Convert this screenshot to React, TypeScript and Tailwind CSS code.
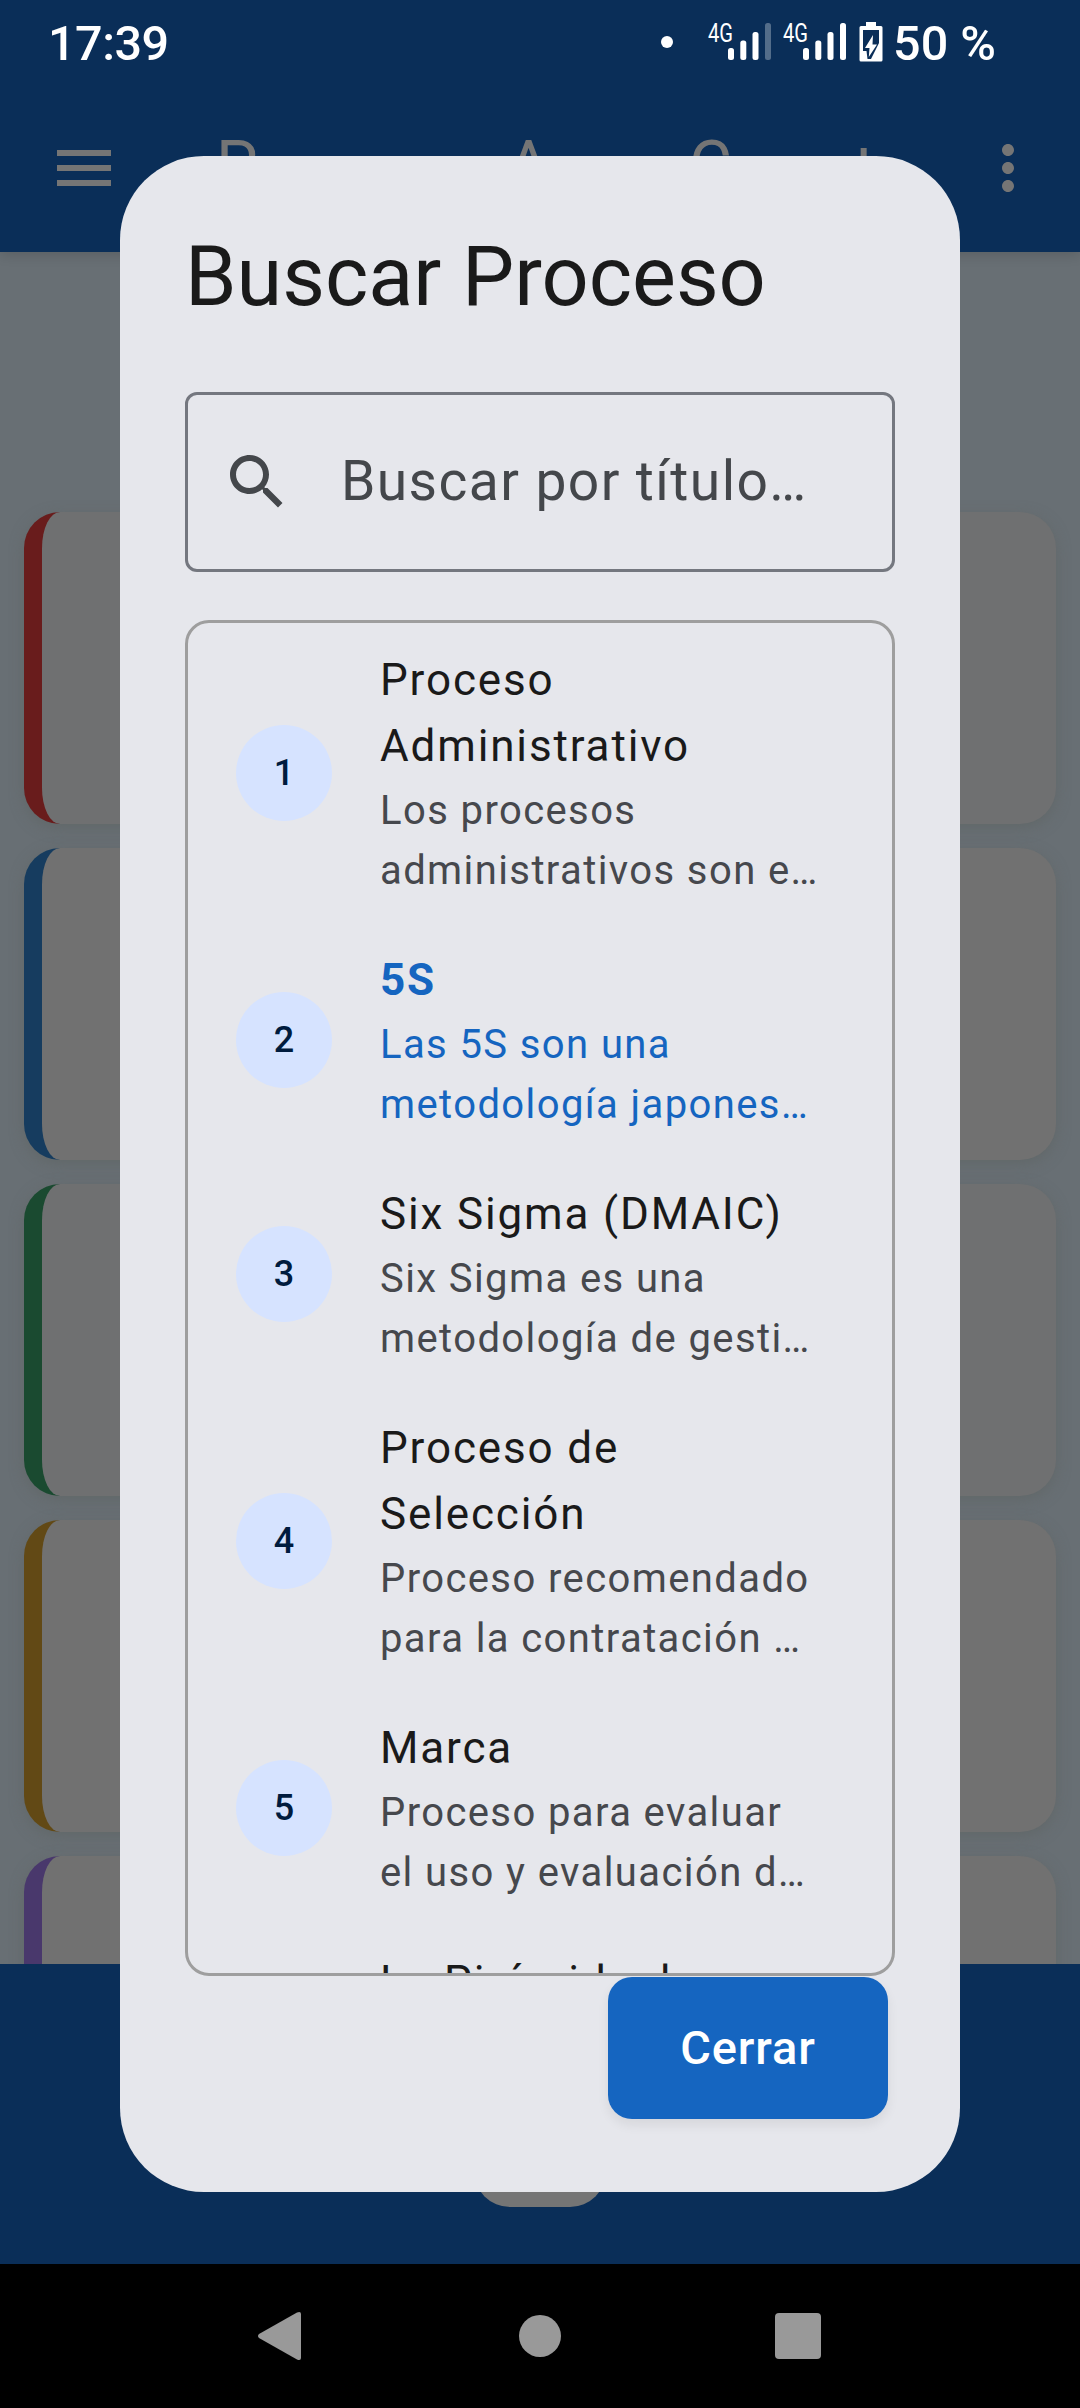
import React from 'react';

const processes = [
  { title: ['Proceso', 'Administrativo'], text: ['Los procesos', 'administrativos son e…'] },
  { title: ['5S'], text: ['Las 5S son una', 'metodología japones…'], active: true },
  { title: ['Six Sigma (DMAIC)'], text: ['Six Sigma es una', 'metodología de gesti…'] },
  { title: ['Proceso de', 'Selección'], text: ['Proceso recomendado', 'para la contratación …'] },
  { title: ['Marca'], text: ['Proceso para evaluar', 'el uso y evaluación d…'] },
  { title: ['La Pirámide de'], text: ['', ''] },
];

const cardBorders = [
  'border-[#691c1c] bg-[#6f7071]',
  'border-[#163c5f] bg-[#717171]',
  'border-[#1a4a30] bg-[#6f7071]',
  'border-[#624915] bg-[#717171]',
  'border-[#49386c] bg-[#717171]',
];

function Signal({ weak }: { weak?: boolean }) {
  return (
    <svg width="63" height="38" viewBox="0 0 63 38" fill="#fff" className="shrink-0 overflow-visible">
      <text x="0" y="19" fontSize="26" fontFamily="Roboto" textLength="25" lengthAdjust="spacingAndGlyphs">4G</text>
      <rect x="20" y="25" width="6" height="12" rx="2.5" />
      <rect x="32.3" y="17.5" width="6" height="19.5" rx="2.5" />
      <rect x="44.5" y="9" width="6" height="28" rx="2.5" />
      <rect x="57" y="0" width="6" height="37" rx="2.5" opacity={weak ? 0.3 : 1} />
    </svg>
  );
}

function Battery() {
  return (
    <svg width="24" height="40" viewBox="0 0 24 40" className="shrink-0">
      <path d="M7 0h10v4h5a1.500 1.500 0 0 1 1.500 1.500V38a1.500 1.500 0 0 1-1.500 1.500H2A1.500 1.500 0 0 1 .5 38V5.500A1.500 1.500 0 0 1 2 4h5z" fill="#fff" />
      <path d="M4 8h16v13L12 37H8.500L7.500 29H4z" fill="#0a2e58" />
      <path d="M14 13 6 26h4.500l-.7 9L18 22.500h-4.500z" fill="#fff" />
    </svg>
  );
}

export default function App() {
  return (
    <div className="relative flex h-[2408px] w-[1080px] flex-col overflow-hidden bg-[#686f74] font-[Roboto,sans-serif]">
      <header className="relative z-10 h-[252px] shrink-0 bg-[#0a2e58] shadow-[0_3px_12px_rgba(0,0,0,0.14)]">
        <div className="flex h-[84px] items-center pl-[48px] pr-[84px] text-white">
          <span className="pt-[3px] text-[48.500px] font-medium leading-[84px] tracking-[-0.500px]">17:39</span>
          <span className="ml-auto mr-[35px] size-3 rounded-full bg-white" />
          <div className="mr-[13px] flex gap-[12px]">
            <Signal weak />
            <Signal />
          </div>
          <Battery />
          <span className="ml-[10px] pt-[3px] text-[48.500px] font-medium leading-[84px]">50 %</span>
        </div>
        <div className="flex h-[168px] items-center">
          <svg width="72" height="72" viewBox="0 0 24 24" fill="#757575" className="ml-[48px]">
            <path d="M3 18h18v-2H3v2zm0-5h18v-2H3v2zm0-7v2h18V6H3z" />
          </svg>
          <div className="mb-[4px] ml-[96px] flex text-[66px] leading-[96px] text-[#757575]">
            <span className="w-[291px]">P</span>
            <span className="w-[182px]">A</span>
            <span className="w-[165px]">C</span>
            <span className="-mb-[4px] pt-[4px]">t</span>
          </div>
          <svg width="72" height="72" viewBox="0 0 24 24" fill="#757575" className="ml-auto mr-[36px]">
            <path d="M12 8c1.100 0 2-.9 2-2s-.9-2-2-2-2 .9-2 2 .9 2 2 2zm0 2c-1.100 0-2 .9-2 2s.9 2 2 2 2-.9 2-2-.9-2-2-2zm0 6c-1.100 0-2 .9-2 2s.9 2 2 2 2-.9 2-2-.9-2-2-2z" />
          </svg>
        </div>
      </header>

      <main className="flex h-[1712px] shrink-0 flex-col gap-6 overflow-hidden px-6 pt-[260px]">
        {cardBorders.map((tone) => (
          <div key={tone} className={`h-[312px] shrink-0 rounded-[36px] border-l-[18px] shadow-[0_4px_14px_rgba(94,100,98,0.65)] ${tone}`} />
        ))}
      </main>

      <footer className="flex h-[300px] shrink-0 items-end justify-center bg-[#0a2e58] pb-[57px]">
        <div className="h-[96px] w-[132px] rounded-[36px] bg-[#757575]" />
      </footer>

      <nav className="flex h-[144px] shrink-0 items-center justify-center gap-[214px] bg-black">
        <svg width="46" height="50" viewBox="2 0 46 50" fill="#999" className="overflow-visible">
          <path d="M2 23 40 1.500Q44 0 44 3V47Q44 50 40 48.500L2 27Q0 25 2 23z" />
        </svg>
        <div className="size-[42px] rounded-full bg-[#999]" />
        <div className="size-[46px] rounded-[4px] bg-[#999]" />
      </nav>

      <section className="absolute left-[120px] top-[156px] z-20 flex h-[2036px] w-[840px] flex-col rounded-[84px] bg-[#e6e7ec] px-[65px] pt-[71px]">
        <h1 className="h-[100px] text-[82.800px] leading-[99px] text-[#1a1a1a]">Buscar Proceso</h1>
        <div className="mt-[65px] flex h-[180px] shrink-0 items-center rounded-[12px] border-3 border-[#74777f] pl-[33px] text-[#44474b]">
          <svg width="72" height="72" viewBox="0 0 24 24" fill="currentColor">
            <path d="M15.500 14h-.79l-.28-.27C15.410 12.590 16 11.110 16 9.500 16 5.910 13.090 3 9.500 3S3 5.910 3 9.500 5.910 16 9.500 16c1.610 0 3.090-.59 4.230-1.570l.27.28v.79l5 4.990L20.490 19l-4.990-5zm-6 0C7.010 14 5 11.990 5 9.500S7.010 5 9.500 5 14 7.010 14 9.500 11.990 14 9.500 14z" />
          </svg>
          <span className="mb-[2px] ml-[48px] text-[55.200px] tracking-[1.400px]">Buscar por título…</span>
        </div>
        <ul className="mt-[48px] h-[1356px] shrink-0 overflow-hidden rounded-[24px] border-3 border-[#9e9e9e]">
          {processes.map((p, i) => (
            <li key={i} className={`flex items-center py-6 pl-[48px] ${p.active ? 'text-[#1565c0]' : 'text-[#46484d]'}`}>
              <span className="mr-[48px] flex size-[96px] shrink-0 items-center justify-center rounded-full bg-[#d6e3ff] text-[36px] font-medium text-[#001b3e]">
                {i + 1}
              </span>
              <div className="whitespace-nowrap">
                {p.title.map((line) => (
                  <div key={line} className={`h-[66px] text-[44px] leading-[66px] tracking-[1.850px] ${p.active ? 'font-bold' : 'text-[#1a1a1a]'}`}>{line}</div>
                ))}
                {p.text.map((line, n) => (
                  <div key={n} className="h-[60px] text-[40px] leading-[63px] tracking-[1.400px]">{line}</div>
                ))}
              </div>
            </li>
          ))}
        </ul>
        <button className="mr-[7px] mt-px flex h-[142px] w-[280px] shrink-0 items-center justify-center self-end rounded-[24px] bg-[#1565c0] text-[47px] font-medium tracking-[0.900px] text-white shadow-[0_6px_12px_rgba(0,0,0,0.07)]">
          Cerrar
        </button>
      </section>
    </div>
  );
}
